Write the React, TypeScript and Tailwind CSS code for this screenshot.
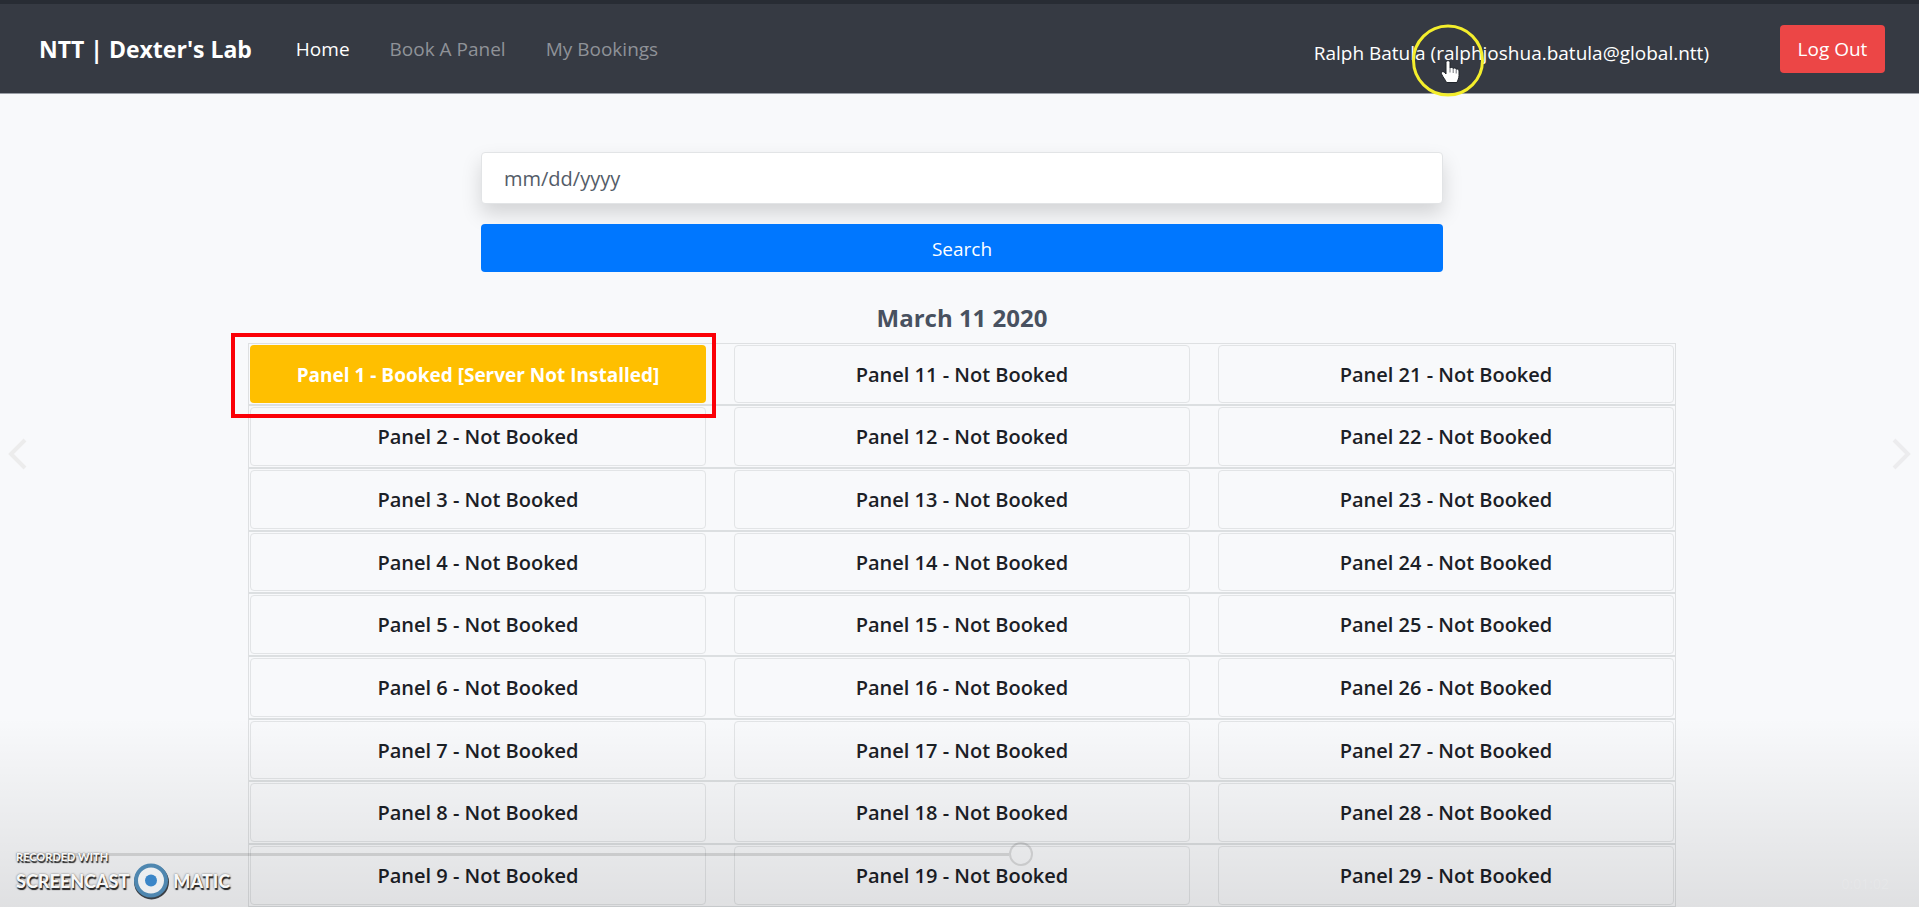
import React from "react";

const rows = [1, 2, 3, 4, 5, 6, 7, 8, 9];

const navLinks = [
  { label: "Home", active: true },
  { label: "Book A Panel", active: false },
  { label: "My Bookings", active: false },
];

function Header() {
  return (
    <header className="flex h-[94px] items-center border-t-4 border-b border-t-[#282c34] border-b-[#9a9ea6] bg-[#363a43] pr-[34px] pl-[39px] text-[19px] text-white">
      <a href="#home" className="pt-0.5 text-[23px] font-bold whitespace-nowrap">
        NTT | Dexter's Lab
      </a>
      <nav className="ml-11 flex gap-10 pt-0.5 whitespace-nowrap">
        {navLinks.map((link) => (
          <a
            key={link.label}
            href="#nav"
            className={link.active ? "text-white" : "text-[#8f9298]"}
          >
            {link.label}
          </a>
        ))}
      </nav>
      <span className="mt-2 mr-[71px] ml-auto pt-0.5 whitespace-nowrap">
        Ralph Batula (ralphjoshua.batula@global.ntt)
      </span>
      <button
        type="button"
        className="h-12 w-[105px] rounded bg-[#ec4646] pt-0.5 whitespace-nowrap"
      >
        Log Out
      </button>
    </header>
  );
}

function SearchForm() {
  return (
    <form
      className="flex w-full max-w-[962px] flex-col"
      onSubmit={(event) => event.preventDefault()}
    >
      <input
        type="text"
        aria-label="Date"
        placeholder="mm/dd/yyyy"
        className="h-[52px] rounded border border-[#e2e4e6] bg-white px-[22px] text-xl shadow-[0_10px_20px_rgba(0,0,0,0.15)] outline-none placeholder:text-[#545c68]"
      />
      <button
        type="submit"
        className="mt-5 h-12 rounded bg-[#0077ff] pt-0.5 text-[19px] text-white"
      >
        Search
      </button>
    </form>
  );
}

function PanelButton({ id }: { id: number }) {
  const booked = id === 1;
  return (
    <div className="relative flex">
      <button
        type="button"
        className={
          booked
            ? "w-full rounded bg-[#ffbf00] pt-0.5 text-[19px] font-bold text-white"
            : "w-full rounded border border-[#e2e4e6] pt-px text-xl font-semibold text-[#1b2026]"
        }
      >
        {booked
          ? "Panel 1 - Booked [Server Not Installed]"
          : `Panel ${id} - Not Booked`}
      </button>
      {booked && (
        <div className="pointer-events-none absolute -top-3 -right-2.5 -bottom-[15px] -left-[19px] z-10 border-4 border-[#fb0007]" />
      )}
    </div>
  );
}

function PanelGrid() {
  return (
    <div className="w-full max-w-[1428px] border border-[#dee0e2]">
      {rows.map((row) => (
        <div
          key={row}
          className="grid h-[63px] grid-cols-3 gap-7 border-b-2 border-[#dcdfe1] p-px nth-[3n+1]:h-[62px]"
        >
          <PanelButton id={row} />
          <PanelButton id={row + 10} />
          <PanelButton id={row + 20} />
        </div>
      ))}
    </div>
  );
}

function Pointer() {
  return (
    <svg
      className="pointer-events-none absolute top-6 left-[1411px]"
      width="74"
      height="74"
      viewBox="0 0 74 74"
      aria-hidden="true"
    >
      <circle cx="37" cy="36.5" r="34.5" fill="none" stroke="#f4ee2c" strokeWidth="3" />
      <path
        d="M35 38.500c0-2.400 4-2.400 4 0V44c.8-1 2.900-.8 3.200.600.800-1.100 2.700-.8 3 .7 1.300-.8 2.800 0 2.800 1.700v4.500c0 3-1.300 4.500-2 7H35.500c-1-2.500-3-4.500-5-8.500-.8-2 1.500-3.200 3-1.500L35 50z"
        fill="#fff"
        stroke="#20242b"
        strokeWidth="1"
      />
      <path d="M39 44v4.500M42.200 44.800V49M45.200 45.500V49.500" stroke="#50545c" strokeWidth="0.800" />
    </svg>
  );
}

function Chevron({ right }: { right?: boolean }) {
  return (
    <button
      type="button"
      aria-label={right ? "Next" : "Previous"}
      className={
        right
          ? "absolute top-[438px] right-2 text-[#ececee]"
          : "absolute top-[438px] left-2 text-[#ececec]"
      }
    >
      <svg width="20" height="32" viewBox="0 0 20 32" fill="none" stroke="currentColor" strokeWidth="4">
        <path d={right ? "M3 2l14 14L3 30" : "M17 2L3 16l14 14"} />
      </svg>
    </button>
  );
}

function Watermark() {
  return (
    <div className="absolute bottom-2 left-4 flex flex-col font-['Lato','Open_Sans',sans-serif] font-black whitespace-nowrap text-[#f7f7f7] [text-shadow:1px_2px_1px_#222,0_0_2px_#666]">
      <span className="text-[11px] leading-3">RECORDED WITH</span>
      <div className="flex h-9 items-center gap-0.5 text-lg">
        <span>SCREENCAST</span>
        <svg width="40" height="38" viewBox="0 0 40 38" aria-hidden="true">
          <ellipse cx="20.500" cy="20" rx="15.500" ry="15.500" fill="none" stroke="#3a3f45" strokeWidth="4" />
          <circle cx="20" cy="18.500" r="15" fill="#eceef0" stroke="#4f87b0" strokeWidth="4" />
          <circle cx="20" cy="18.500" r="6" fill="#3b86c8" />
        </svg>
        <span>MATIC</span>
      </div>
    </div>
  );
}

function PlayerOverlay() {
  return (
    <div className="pointer-events-none absolute inset-0">
      <div className="absolute inset-x-0 bottom-0 h-[190px] bg-linear-to-b from-black/0 to-black/10" />
      <div className="absolute bottom-[41px] left-4 flex w-[1017px] items-center">
        <div className="h-[3px] grow bg-black/12" />
        <div className="size-6 rounded-full border-2 border-black/12" />
      </div>
      <span className="absolute right-[30px] bottom-[13px] text-sm leading-5 text-white/15">
        0:01:02
      </span>
      <Watermark />
      <Chevron />
      <Chevron right />
      <Pointer />
    </div>
  );
}

export default function App() {
  return (
    <div className="relative h-screen overflow-hidden bg-[#f8f9fb] font-['Open_Sans','Noto_Sans',sans-serif]">
      <Header />
      <main className="flex flex-col items-center pt-[58px] pl-[5px]">
        <SearchForm />
        <h1 className="mt-7 mb-[7px] text-2xl leading-9 font-bold text-[#485160]">
          March 11 2020
        </h1>
        <PanelGrid />
      </main>
      <PlayerOverlay />
    </div>
  );
}
